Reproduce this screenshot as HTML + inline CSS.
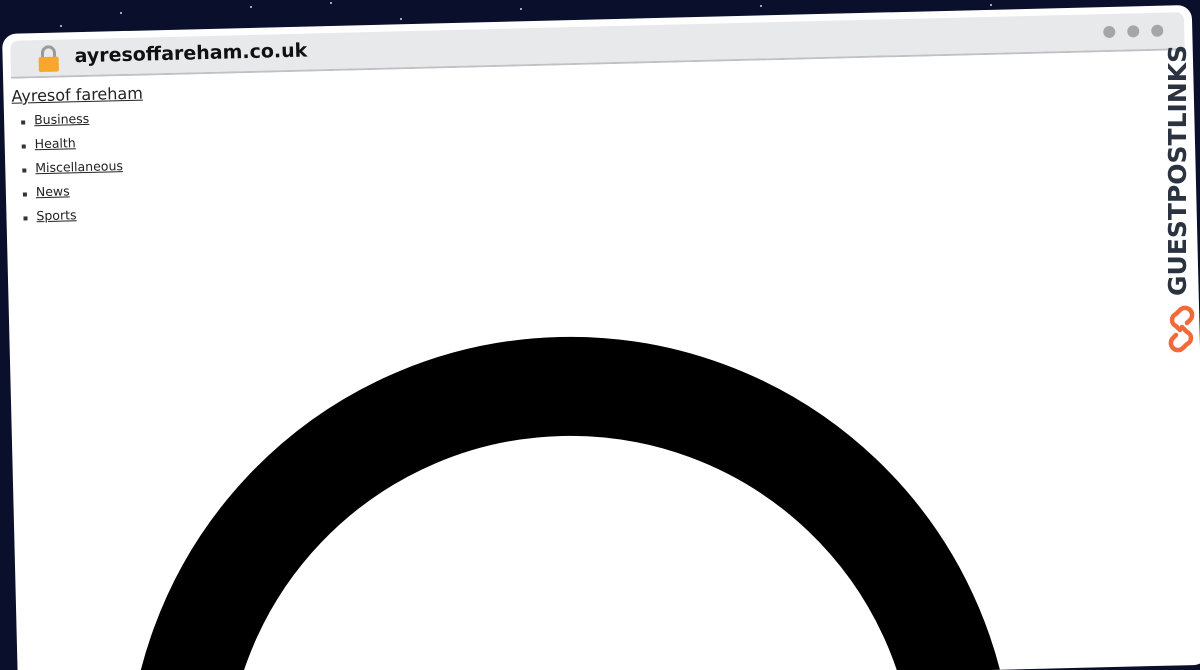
<!DOCTYPE html>
<html><head><meta charset="utf-8"><style>
html,body{margin:0;padding:0;width:1200px;height:670px;overflow:hidden;background:#0a0f2b;font-family:"DejaVu Sans","Liberation Sans",sans-serif}
#f{position:relative;width:1200px;height:670px;overflow:hidden;background:#0a0f2b}
.s{position:absolute;width:2px;height:2px;background:#cfd6ea;border-radius:50%}
#w{position:absolute;left:2px;top:34px;width:1190px;height:660px;background:#fff;border-radius:14px;transform-origin:0 0;transform:rotate(-1.4deg);overflow:hidden}
#h{position:absolute;left:8px;top:7px;right:8px;height:36px;background:#e8e9eb;border-bottom:2px solid #bfc1c5;border-radius:8px 8px 0 0}
#h .u{position:absolute;left:64px;top:6px;font-size:19px;color:#111;font-weight:bold;white-space:nowrap}
.d{position:absolute;top:12px;width:12px;height:12px;border-radius:50%;background:#a4a6aa}
#c{position:absolute;left:8px;top:49px}
a{color:#222;text-decoration:underline;white-space:nowrap}
.t{position:absolute;left:0;top:4px;font-size:16px}
ul{position:absolute;left:0;top:30px;margin:0;padding:0;list-style:none}
li{font-size:12.5px;height:24px;position:relative;padding-left:22px}
li:before{content:"";position:absolute;left:9px;top:8px;width:4px;height:4px;background:#333}
</style></head><body><div id="f">
<div class="s" style="left:120px;top:12px"></div><div class="s" style="left:250px;top:6px"></div>
<div class="s" style="left:400px;top:18px"></div><div class="s" style="left:520px;top:8px"></div>
<div class="s" style="left:610px;top:20px"></div><div class="s" style="left:760px;top:5px"></div>
<div class="s" style="left:880px;top:14px"></div><div class="s" style="left:990px;top:4px"></div>
<div class="s" style="left:60px;top:25px"></div><div class="s" style="left:330px;top:2px"></div>
<div id="w">
 <div id="h">
  <svg style="position:absolute;left:26px;top:5px" width="24" height="28" viewBox="0 0 24 28"><path d="M6 13V8a6 6 0 0 1 12 0v5" fill="none" stroke="#9a9a9a" stroke-width="3"/><rect x="2" y="12" width="20" height="15" rx="2" fill="#f7a72c"/></svg>
  <div class="u">ayresoffareham.co.uk</div>
  <div class="d" style="right:69px"></div><div class="d" style="right:45px"></div><div class="d" style="right:21px"></div>
 </div>
 <div id="c">
  <a class="t">Ayresof fareham</a>
  <ul><li><a>Business</a></li><li><a>Health</a></li><li><a>Miscellaneous</a></li><li><a>News</a></li><li><a>Sports</a></li></ul>
 </div>
 <svg style="position:absolute;left:0;top:0" width="1190" height="660"><circle cx="550" cy="760" r="394" fill="none" stroke="#000" stroke-width="99"/></svg>
</div>
<div style="position:absolute;left:1163px;top:296px;transform-origin:0 0;transform:rotate(-90deg);font-family:'DejaVu Sans','Liberation Sans',sans-serif;font-weight:bold;font-size:25px;color:#2b3340;white-space:nowrap">GUESTPOSTLINKS</div>
<svg style="position:absolute;left:1168px;top:305px" width="28" height="48" viewBox="0 0 28 48"><path d="M12 25 L8 21 A6.5 6.5 0 0 1 8 9 L12 5 A7 7 0 0 1 22 5 A7 7 0 0 1 22 15 L19 18" fill="none" stroke="#f26a3a" stroke-width="4.5" stroke-linecap="round"/><path d="M14 22 L19 27 A6.5 6.5 0 0 1 19 39 L15 43 A7 7 0 0 1 5 43 A7 7 0 0 1 5 33 L8 30" fill="none" stroke="#f26a3a" stroke-width="4.5" stroke-linecap="round"/></svg>
</div></body></html>
